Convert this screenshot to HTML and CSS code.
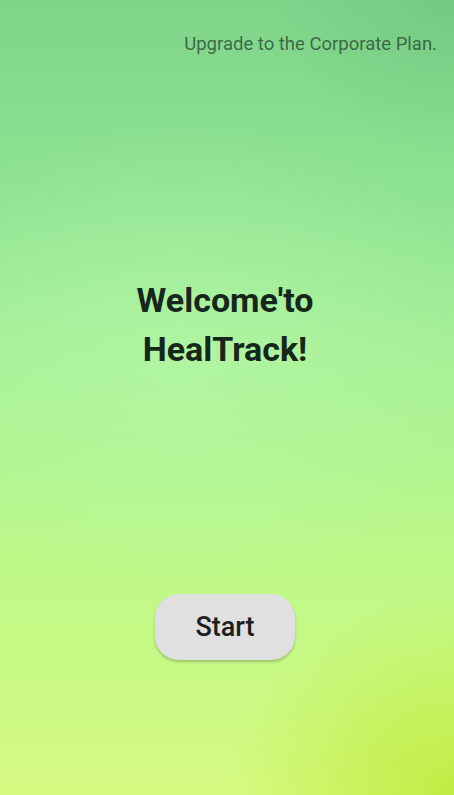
FILE: index.html
```html
<!DOCTYPE html>
<html>
<head>
<meta charset="utf-8">
<link rel="stylesheet" href="styles.css">
</head>
<body>
<main class="screen">
  <header class="top">
    <span class="upgrade">Upgrade to the Corporate Plan.</span>
  </header>
  <section class="hero">
    <h1 class="title">Welcome'to<br>HealTrack!</h1>
  </section>
  <section class="action">
    <button class="start">Start</button>
  </section>
</main>
</body>
</html>
```
FILE: styles.css
```css
html, body {
  margin: 0;
  padding: 0;
}
body {
  font-family: Roboto, "Noto Sans", sans-serif;
}
.screen {
  width: 454px;
  height: 795px;
  box-sizing: border-box;
  display: flex;
  flex-direction: column;
  background:
    radial-gradient(ellipse 70% 30% at 40% 45%, rgba(185, 250, 170, 0.55), rgba(185, 250, 170, 0) 100%),
    radial-gradient(ellipse 50% 25% at 100% 100%, rgba(190, 235, 60, 0.9), rgba(190, 235, 60, 0) 100%),
    radial-gradient(ellipse 40% 20% at 100% 0%, rgba(110, 195, 125, 0.6), rgba(110, 195, 125, 0) 100%),
    linear-gradient(180deg, #7fd48a 0%, #8fe394 25%, #a6f096 45%, #bcf888 70%, #d6fa82 100%);
}
.top {
  display: flex;
  justify-content: flex-end;
  padding: 33px 17px 0 0;
}
.upgrade {
  font-size: 18.5px;
  line-height: 22px;
  color: rgba(30, 60, 40, 0.72);
}
.hero {
  display: flex;
  justify-content: center;
  padding: 221px 4px 0 0;
}
.title {
  margin: 0;
  font-size: 34px;
  font-weight: 700;
  line-height: 49px;
  text-align: center;
  color: #17261a;
}
.action {
  display: flex;
  justify-content: center;
  padding: 220px 4px 0 0;
}
.start {
  width: 140px;
  height: 66px;
  border: none;
  border-radius: 24px;
  background: #e0e0e0;
  box-shadow: 0 2px 3px rgba(0, 0, 0, 0.22);
  font-family: Roboto, sans-serif;
  font-size: 27px;
  font-weight: 500;
  color: #1e1e1e;
  padding: 0;
}
```
